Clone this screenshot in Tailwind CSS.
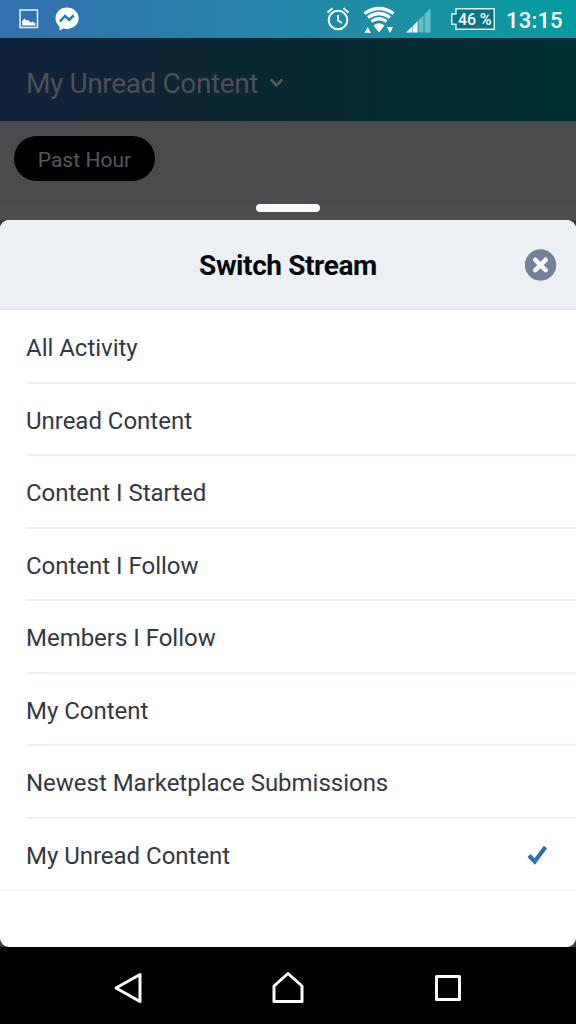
<!DOCTYPE html>
<html lang="en">
<head>
<meta charset="utf-8">
<title>Switch Stream</title>
<script src="https://cdn.jsdelivr.net/npm/@tailwindcss/browser@4"></script>
</head>
<body class="w-[576px] h-[1024px] overflow-hidden flex flex-col bg-[#4b4b4c] font-['Roboto',sans-serif]">
  <header class="h-[38px] shrink-0 flex items-center bg-linear-to-r from-[#3270ae] to-[#009da0] text-white">
    <svg class="w-[20px] h-[20px] ml-[19px]" viewBox="0 0 20 20" fill="none"><rect x="1" y="1" width="17.500" height="17.500" stroke="#d5f2ff" stroke-width="1.600"/><path d="M3 16.500V12L5.500 9.500l2 2 2-.5 2 2.500 2-1 3 2v2z" fill="#fff"/></svg>
    <svg class="w-[24px] h-[24px] ml-[16px]" viewBox="0 0 24 24"><path d="M12 .5C5.500.5.500 5.200.500 11.300c0 3.300 1.500 6.200 4 8.200V23.500l4-2c1.100.3 2.300.4 3.500.4 6.500 0 11.700-4.700 11.700-10.600S18.500.5 12 .5z" fill="#fff"/><path d="M5 14.500l5-5.500 4.200 3.700L18.700 8.500" fill="none" stroke="#2d79ac" stroke-width="2.600"/></svg>
    <svg class="w-[24px] h-[26px] ml-[247px]" viewBox="0 0 24 26" fill="none" stroke="#fff" stroke-width="2"><circle cx="12" cy="14" r="9.300"/><path d="M12 9v5.500l4 2.500M1.500 6.500l5-4.300M22.500 6.500l-5-4.300"/></svg>
    <svg class="w-[34px] h-[28px] ml-[12px] mt-[2px]" viewBox="0 0 34 28" fill="none" stroke="#fff"><path d="M2.500 7.500q14.500-10 29 0M6 11.500q11-8 22 0M9.500 15.500q7.500-5.500 15 0" stroke-width="3.300"/><path d="M11.500 19.500q5.500-4.500 11 0l-5.500 7z" fill="#fff" stroke="none"/><path d="M2.500 27l3.200-6 3.200 6zM25 21h6l-3 6z" fill="#fff" stroke="none"/></svg>
    <svg class="w-[25px] h-[25px] ml-[10px] mt-[2px]" viewBox="0 0 25 25"><path d="M0 24.500L6 18.700V24.500zM6.500 18.200l5-5V24.500h-5z" fill="#fff"/><path d="M12.500 12.200l5-5V24.500h-5zM18.500 6.200L24.500 0v24.500h-6z" fill="#66bfc9"/></svg>
    <div class="relative w-[44px] h-[22px] ml-[20px]">
      <svg class="absolute inset-0 w-full h-full" viewBox="0 0 44 22"><path d="M5 .8h38.200v20.400H5v-5H.8V6H5z" fill="#087680" stroke="#d8f5f6" stroke-width="1.400"/></svg>
      <span class="absolute left-[7px] top-[1px] text-[16px] leading-[22px] font-medium tracking-[-0.100px] whitespace-nowrap">46 %</span>
    </div>
    <span class="ml-[11px] mt-[3px] text-[22px] font-medium leading-[26px] tracking-[0.200px]">13:15</span>
  </header>

  <div class="h-[84px] shrink-0 flex items-center bg-linear-to-r from-[#102238] via-[#0a2831] to-[#003033] text-[#4e5052] pl-[26px] pt-[8px] border-b border-[#404447]">
    <span class="text-[28px] leading-8 tracking-[-0.380px]">My Unread Content</span>
    <svg class="w-[15px] h-[11px] ml-[11px] mb-[2px]" viewBox="0 0 16 12" fill="none" stroke="#55585a" stroke-width="3"><path d="M1.500 2.500L8 9l6.500-6.500"/></svg>
  </div>

  <div class="h-[83px] shrink-0 bg-[#4a4b4d] pl-[14px] pt-[14px]">
    <div class="w-[141px] h-[45px] rounded-full bg-[#000102] flex items-center justify-center text-[#56585b] text-[21px] tracking-[0.050px] pt-[4px]">Past Hour</div>
  </div>
  <div class="h-[15px] shrink-0 flex justify-center bg-[#4e4d4d]">
    <div class="w-[64px] h-[8px] mt-[-1px] rounded-full bg-[#f8faff]"></div>
  </div>

  <section class="bg-[#3b3c3d] shrink-0">
    <div class="h-[727px] rounded-[9px] overflow-hidden bg-white flex flex-col">
      <div class="h-[90px] shrink-0 bg-[#ecf0f5] border-b-2 border-[#e5ebf0] grid grid-cols-[51px_1fr_51px] items-center pt-[2px]">
        <h1 class="col-start-2 text-center text-[28px] font-bold text-[#06090e] tracking-[-0.400px] pt-[2px]">Switch Stream</h1>
        <svg class="w-[32px] h-[32px]" viewBox="0 0 32 32"><circle cx="15.500" cy="16" r="15.700" fill="#73829a"/><path d="M10.300 10.800l10.400 10.400M20.700 10.800L10.300 21.200" stroke="#f4f7fb" stroke-width="4.600" stroke-linecap="round"/></svg>
      </div>
      <ul class="shrink-0 grid auto-rows-[72.5px] pt-[1px] pl-[26px] text-[24px] text-[#323846] tracking-[-0.020px]">
        <li class="flex items-center pt-[4px] border-b-2 border-[#edf1f3]">All Activity</li>
        <li class="flex items-center pt-[4px] border-b-2 border-[#edf1f3]">Unread Content</li>
        <li class="flex items-center pt-[4px] border-b-2 border-[#edf1f3]">Content I Started</li>
        <li class="flex items-center pt-[4px] border-b-2 border-[#edf1f3]">Content I Follow</li>
        <li class="flex items-center pt-[4px] border-b-2 border-[#edf1f3]">Members I Follow</li>
        <li class="flex items-center pt-[4px] border-b-2 border-[#edf1f3]">My Content</li>
        <li class="flex items-center pt-[4px] border-b-2 border-[#edf1f3]">Newest Marketplace Submissions</li>
        <li class="flex items-center justify-between pt-[4px] pr-[28px] -ml-[26px] pl-[26px] border-b-2 border-[#f7f8f9]">My Unread Content
          <svg class="w-[21px] h-[21px]" viewBox="0 0 21 21" fill="none" stroke="#316fa8" stroke-width="4.200"><path d="M2 10.500l5.700 6L18.500 2"/></svg>
        </li>
      </ul>
    </div>
  </section>

  <nav class="h-[77px] shrink-0 bg-black grid grid-cols-[48px_160px_160px_160px_48px] items-center justify-items-center">
    <svg class="col-start-2 w-[32px] h-[34px] mt-[4px]" viewBox="0 0 32 34" fill="none" stroke="#fff" stroke-width="3" stroke-linejoin="round"><path d="M4 17L28 3.500v27z"/></svg>
    <svg class="w-[34px] h-[34px] mt-[4px]" viewBox="0 0 34 34" fill="none" stroke="#fff" stroke-width="3" stroke-linejoin="round"><path d="M17 2.500L31 15v15.500H3V15z"/></svg>
    <svg class="w-[28px] h-[28px] mt-[4px]" viewBox="0 0 28 28" fill="none" stroke="#fff" stroke-width="3" stroke-linejoin="round"><rect x="2.500" y="2.500" width="23" height="23"/></svg>
  </nav>
</body>
</html>
